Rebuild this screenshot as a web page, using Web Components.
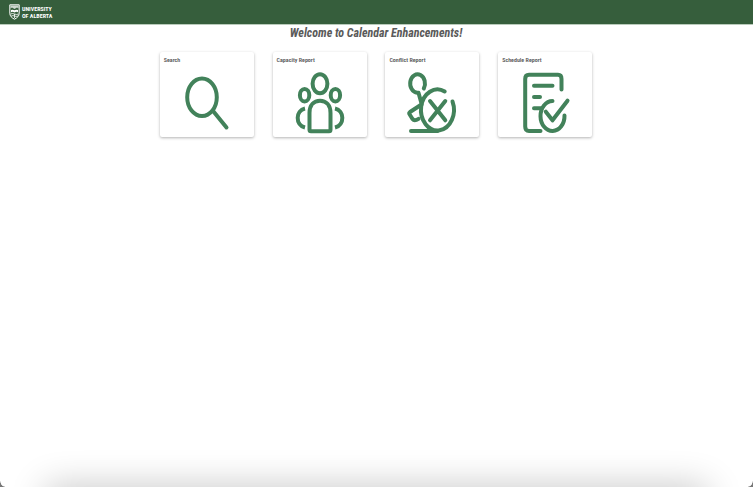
<!DOCTYPE html>
<html lang="en">
<head>
<meta charset="utf-8">
<title>Calendar Enhancements</title>
<style>
html,body{margin:0;height:100%;background:#fff}
body{font-family:"Roboto Condensed","Roboto","Liberation Sans",sans-serif;color:#5a5a5a}
</style>
</head>
<body>
<calendar-app>
  <brand-bar slot="header"></brand-bar>
  <span slot="title">Welcome to Calendar Enhancements!</span>
  <report-tile href="#search" icon="search">Search</report-tile>
  <report-tile href="#capacity" icon="people">Capacity Report</report-tile>
  <report-tile href="#conflict" icon="conflict">Conflict Report</report-tile>
  <report-tile href="#schedule" icon="schedule">Schedule Report</report-tile>
</calendar-app>
<script>
class CalendarApp extends HTMLElement {
  constructor() {
    super();
    this.attachShadow({ mode: "open" }).innerHTML = `
<style>
:host{display:flex;flex-direction:column;min-height:100vh;position:relative;overflow:hidden}
h1{margin:0;font-size:12px;line-height:16px;font-weight:700;font-style:italic;text-align:center}
main{flex:1;padding-right:1px}
nav{display:grid;grid-template-columns:repeat(4,12.5%);justify-content:center;column-gap:2.5%;padding-top:11px}
.dock{position:absolute;left:8%;right:8%;bottom:-18px;height:4px;box-shadow:0 0 36px 14px rgba(0,0,0,.24)}
.corner{position:absolute;bottom:0;width:5px;height:6px}
.left{left:0;background:radial-gradient(ellipse 5px 6px at 100% 0,transparent 88%,#777 100%)}
.right{right:0;background:radial-gradient(ellipse 5px 6px at 0 0,transparent 88%,#777 100%)}
</style>
<slot name="header"></slot>
<main><h1><slot name="title"></slot></h1><nav aria-label="Reports"><slot></slot></nav></main>
<div class="dock"></div><div class="corner left"></div><div class="corner right"></div>`;
  }
}
class BrandBar extends HTMLElement {
  constructor() {
    super();
    this.attachShadow({ mode: "open" }).innerHTML = `
<style>
:host{display:block;background:#365e3c;border-bottom:1px solid #b9cbbb}
header{display:flex;align-items:center;height:24px;padding-left:9px}
a{display:flex;align-items:center;gap:2px;color:#fff;text-decoration:none;font-size:6px;line-height:7px;font-weight:700}
span{display:block}
svg{width:11px;height:16px}
</style>
<header><a href="#home">
<svg viewBox="0 0 11 16" aria-hidden="true">
<path d="M.8.8h9.4v8.4c0 2.8-2 4.7-4.7 6C2.800 13.900.8 12 .8 9.200z" fill="#365e3c" stroke="#fff" stroke-width="1"/>
<path d="M1.500 4.500V1.500h8v3L8 3.500 5.500 5 3 3.500z" fill="#fff" opacity=".75"/>
<path d="M2 6q1.700-.8 3.500.3Q7.300 5.200 9 6v2.200q-1.700-.8-3.500.3Q3.700 7.400 2 8.200z" fill="#fff"/>
<path d="M1.500 10q2-1 4 0t4 0M2.200 12q1.700-.8 3.300 0t3.300 0M5.500 10v4" fill="none" stroke="#fff" stroke-width=".8"/>
</svg>
<div><span>UNIVERSITY</span><span>OF ALBERTA</span></div></a></header>`;
  }
}
const ICONS = {
  search: '<ellipse cx="25" cy="26.300" rx="14.800" ry="18.800"/><path d="M36.500 40.500L49.500 56.500"/>',
  people: '<ellipse cx="30" cy="12.700" rx="7.400" ry="9.500"/><ellipse cx="14.600" cy="24.200" rx="4.700" ry="6.200"/><ellipse cx="45.400" cy="24.200" rx="4.700" ry="6.200"/><path d="M21 60.300h18q1.500 0 1.500-1.600V42C40.500 34 36 29.700 30 29.700S19.500 34 19.500 42v16.700q0 1.600 1.500 1.600z"/><path stroke-linecap="butt" d="M15 37.500C5.500 39.500 5 54 15 56.500M45 37.500C54.500 39.500 55 54 45 56.500"/>',
  conflict: '<path d="M21.800 17.500A7.400 9.200 0 1 0 15.200 21.700H16.500L19.500 32.500M19.500 33.500L8 41Q6.700 42 7.700 43.500L10.500 48Q12.500 50.500 16.500 47.800"/><path d="M42.700 20.500A16.500 20.500 0 1 0 50.500 30.500M36 60H9M28 30L43.300 49.300M43.300 30L28 49.300"/>',
  schedule: '<path d="M46.500 18.500V8Q46.500 3.700 43 3.700H14Q10.200 3.700 10.200 8V55.500Q10.200 60 14 60H25.500M19 14.700H37.500M19 26h6M19 37.300h7"/><path d="M37.500 30A12 15 0 1 0 49.500 44.500M30.800 40.700L37.500 49.300L52.500 29.700"/>'
};
class ReportTile extends HTMLElement {
  constructor() {
    super();
    this.attachShadow({ mode: "open" }).innerHTML = `
<style>
:host{display:block;min-width:0}
a{display:flex;flex-direction:column;padding:4px 4px 2px;border-radius:2px;background:#fff;color:inherit;text-decoration:none;box-shadow:0 1px 3px rgba(0,0,0,.3)}
span{font-size:6px;line-height:8px;font-weight:600}
svg{align-self:center;width:60px;height:64px;margin-top:7px;fill:none;stroke:#42825a;stroke-width:4;stroke-linecap:round;stroke-linejoin:round}
</style>
<a href="${this.getAttribute("href")}"><span><slot></slot></span>
<svg viewBox="0 0 60 64" aria-hidden="true">${ICONS[this.getAttribute("icon")]}</svg></a>`;
  }
}
customElements.define("calendar-app", CalendarApp);
customElements.define("brand-bar", BrandBar);
customElements.define("report-tile", ReportTile);
</script>
</body>
</html>
